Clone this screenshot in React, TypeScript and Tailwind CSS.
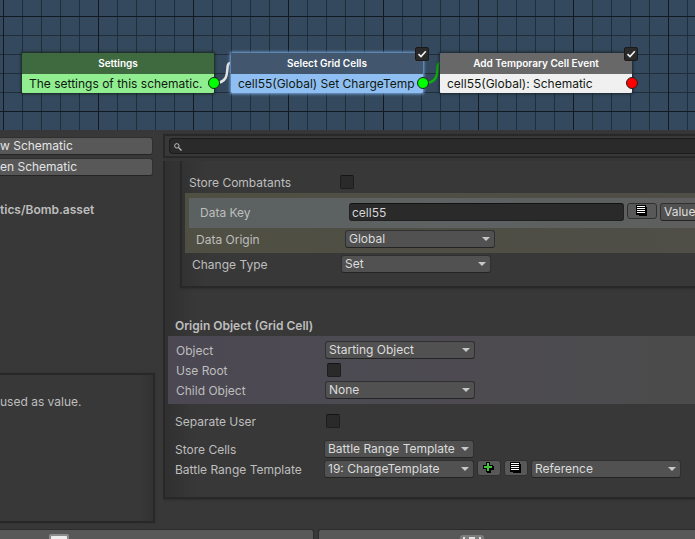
import type { ReactNode } from "react";

function Check() {
  return (
    <svg viewBox="0 0 14 14" className="pointer-events-none absolute inset-0 h-full w-full" aria-hidden="true">
      <path d="M3.5 7.2 6 9.6l4.8-5.4" fill="none" stroke="#f2f2f2" strokeWidth="1.6" />
    </svg>
  );
}

function ListIcon() {
  return (
    <svg width="12" height="12" viewBox="0 0 12 12" shapeRendering="crispEdges" aria-hidden="true">
      <path d="M0 0h10v2h1v9H3v-1H0z" fill="#000" />
      <path d="M1 1h8v1H1zM1 3h8v1H1zM1 5h8v1H1zM1 7h8v1H1z" fill="#fff" />
    </svg>
  );
}

function PlusIcon() {
  return (
    <svg width="12" height="12" viewBox="0 0 12 12" shapeRendering="crispEdges" aria-hidden="true">
      <path d="M3 0h4v3h3v1h1v4H8v3H4v-1H3V7H0V3h3z" fill="#000" />
      <path d="M4 1h2v3h3v2H6v3H4V6H1V4h3z" fill="#3fc43f" />
    </svg>
  );
}

function Dropdown({ id, label, value, width }: { id: string; label?: string; value: string; width: string }) {
  return (
    <div className={`relative shrink-0 ${width}`}>
      <select
        id={id}
        aria-label={label}
        className="block h-[18px] w-full appearance-none rounded-[3px] border border-[#303030] border-b-[#242424] bg-[#515151] pl-[3px] pr-4 text-[12px] leading-[16px] text-[#dcdcdc] outline-none"
      >
        <option>{value}</option>
      </select>
      <svg width="8" height="4" viewBox="0 0 8 4" className="pointer-events-none absolute right-[5px] top-[7px]" aria-hidden="true">
        <path d="M0 0h8L4 4z" fill="#c8c8c8" />
      </svg>
    </div>
  );
}

function CheckField({ id }: { id: string }) {
  return (
    <input
      id={id}
      type="checkbox"
      className="ml-0.5 h-3.5 w-3.5 shrink-0 appearance-none rounded-[2px] border border-[#1e1e1e] border-t-[#141414] bg-[#2a2a2a]"
    />
  );
}

function Row({ id, label, className = "h-5", children }: { id: string; label: string; className?: string; children: ReactNode }) {
  return (
    <div className={`flex items-center ${className}`}>
      <label htmlFor={id} className="w-[149px] shrink-0 whitespace-nowrap pt-0.5 leading-4">
        {label}
      </label>
      {children}
    </div>
  );
}

function IconButton({ label, width, children }: { label: string; width: string; children: ReactNode }) {
  return (
    <button
      type="button"
      aria-label={label}
      className={`flex h-4 shrink-0 items-center justify-center rounded-[3px] border border-[#303030] bg-[#585858] ${width}`}
    >
      {children}
    </button>
  );
}

type NodeProps = {
  place: string;
  title: string;
  text: string;
  head: string;
  body: string;
  frame: string;
  port: string;
  toggle?: boolean;
};

function SchematicNode({ place, title, text, head, body, frame, port, toggle }: NodeProps) {
  return (
    <article className={`absolute top-[53px] w-[192px] ${place}`}>
      <div className={`overflow-hidden rounded-[1px] ${frame}`}>
        <h2 className={`h-[21px] text-center text-[10px] font-semibold leading-[21px] text-white ${head}`}>{title}</h2>
        <p className={`h-[19px] overflow-hidden whitespace-nowrap pl-[7px] text-[12px] leading-[19px] text-[#101810] ${body}`}>{text}</p>
      </div>
      <span className={`absolute -right-1.5 top-[24px] h-3 w-3 rounded-full border border-[#202020] ${port}`} />
      {toggle && (
        <span className="absolute -right-1.5 -top-1.5 h-3.5 w-3.5">
          <input
            type="checkbox"
            defaultChecked
            aria-label={`Enable ${title}`}
            className="block h-full w-full appearance-none rounded-[2px] border border-[#1a1a1a] bg-[#2a2a2a]"
          />
          <Check />
        </span>
      )}
    </article>
  );
}

export default function App() {
  return (
    <div className="flex h-screen flex-col overflow-hidden bg-[#383838] font-['Inter','Liberation_Sans',sans-serif] text-[12px] text-[#bebebe]">
      <section
        aria-label="Schematic graph"
        className="relative h-[130px] shrink-0 overflow-hidden bg-[#34495e] bg-[linear-gradient(to_right,#111a23_1px,transparent_1px),linear-gradient(to_bottom,#111a23_1px,transparent_1px),linear-gradient(to_right,#202d3a_1px,transparent_1px),linear-gradient(to_bottom,#202d3a_1px,transparent_1px)] bg-[size:95px_95px,95px_95px,19px_19px,19px_19px] bg-[position:3px_16px]"
      >
        <svg className="absolute left-0 top-0 h-full w-full" fill="none" aria-hidden="true">
          <path d="M215 83c18 0 9-20 15-20" stroke="#e4e4e4" strokeWidth="2.5" />
          <path d="M424 83c20 0 10-20 16-20" stroke="#08b408" strokeWidth="2.5" />
        </svg>
        <SchematicNode
          place="left-[22px]"
          title="Settings"
          text="The settings of this schematic."
          head="bg-[#3f6a3f]"
          body="bg-[#90ee90]"
          frame="shadow-[0_0_3px_1px_#16251c]"
          port="bg-[#00ff00]"
        />
        <SchematicNode
          place="left-[231px]"
          title="Select Grid Cells"
          text="cell55(Global) Set ChargeTemp"
          head="bg-[#42566d]"
          body="bg-[#8fbff2]"
          frame="shadow-[0_0_3px_1px_#78a9e0]"
          port="bg-[#00ff00]"
          toggle
        />
        <SchematicNode
          place="left-[440px]"
          title="Add Temporary Cell Event"
          text="cell55(Global): Schematic"
          head="bg-[#686868]"
          body="bg-[#f0f0f0]"
          frame="shadow-[0_0_3px_1px_#1b242e]"
          port="bg-[#ff0000]"
          toggle
        />
      </section>

      <main className="flex min-h-0 flex-1">
        <aside className="flex w-[155px] shrink-0 flex-col pb-1.5 pt-[7px]">
          <div className="flex flex-col gap-[3px] pr-0.5">
            <button type="button" className="h-[18px] rounded-r-[3px] border border-l-0 border-[#303030] border-b-[#242424] bg-[#585858] text-left leading-4 text-[#e4e4e4]">
              w Schematic
            </button>
            <button type="button" className="h-[18px] rounded-r-[3px] border border-l-0 border-[#303030] border-b-[#242424] bg-[#585858] text-left leading-4 text-[#e4e4e4]">
              en Schematic
            </button>
          </div>
          <p className="mt-[26px] font-semibold leading-4">tics/Bomb.asset</p>
          <div className="mt-auto h-[150px] border-2 border-l-0 border-[#282828] bg-[linear-gradient(to_left,#323232,#383838_14px)] pt-[19px] shadow-[0_0_2px_#2c2c2c]">
            <p className="leading-4">used as value.</p>
          </div>
        </aside>

        <section aria-label="Node settings" className="ml-2 min-w-0 flex-1 overflow-hidden pt-1">
          <div className="relative border-y-2 border-l-2 border-[#282828] py-0.5 pl-1 shadow-[0_0_2px_#2c2c2c]">
            <input
              type="search"
              aria-label="Search"
              className="block h-4 w-full rounded-l-[4px] border border-r-0 border-[#1c1c1c] bg-[#2a2a2a] pl-5 text-[#d2d2d2] outline-none"
            />
            <svg width="8" height="8" viewBox="0 0 9 9" fill="none" stroke="#c4c4c4" className="absolute left-[9px] top-[7px]" aria-hidden="true">
              <circle cx="3.2" cy="3.2" r="2.5" strokeWidth="1.1" />
              <path d="m5.2 5.2 3.2 3.2" strokeWidth="1.5" />
            </svg>
          </div>

          <div className="mt-[3px] border-b-2 border-l-2 border-[#282828] bg-[linear-gradient(to_right,#303030,#383838_30px)] pb-[18px] shadow-[0_1px_2px_#2c2c2c]">
            <div className="ml-[15px] border-b-2 border-l-2 border-[#282828] bg-[linear-gradient(to_right,#323232,#383838_24px)] pb-3 pt-[11px] shadow-[0_1px_2px_#2c2c2c]">
              <div className="pb-px pl-[7px]">
                <Row id="store-combatants" label="Store Combatants">
                  <CheckField id="store-combatants" />
                </Row>
              </div>
              <div className="ml-[3px] bg-[linear-gradient(to_right,#504f43,#4f4e47)] pt-[5px]">
                <div className="ml-1 bg-[linear-gradient(to_right,#5a6160,#5e6262_50%,#5e5e5e)] pl-[11px]">
                  <Row id="data-key" label="Data Key" className="h-[30px] pb-0.5">
                    <input
                      id="data-key"
                      type="text"
                      defaultValue="cell55"
                      className="h-[18px] w-[275px] shrink-0 rounded-[3px] border border-[#202020] border-t-[#121212] bg-[#2a2a2a] pl-0.5 leading-4 text-[#d6d6d6] outline-none"
                    />
                    <div className="ml-[3px] flex shrink-0 items-start gap-[3px]">
                      <IconButton label="Data key list" width="w-[30px]">
                        <ListIcon />
                      </IconButton>
                      <Dropdown id="data-key-type" label="Data key type" value="Value" width="w-[150px]" />
                    </div>
                  </Row>
                </div>
                <div className="pl-[11px]">
                  <Row id="data-origin" label="Data Origin" className="h-[25px] pb-1">
                    <Dropdown id="data-origin" value="Global" width="w-[150px]" />
                  </Row>
                </div>
              </div>
              <div className="pl-[10px]">
                <Row id="change-type" label="Change Type" className="h-[21px]">
                  <Dropdown id="change-type" value="Set" width="w-[150px]" />
                </Row>
              </div>
            </div>

            <h3 className="mt-[28px] pl-[10px] font-semibold leading-5">Origin Object (Grid Cell)</h3>
            <div className="ml-[3px] bg-[linear-gradient(to_right,#4b4853,#4d4b51_55%,#4b4b4b)] py-1 pl-2">
              <Row id="object" label="Object">
                <Dropdown id="object" value="Starting Object" width="w-[150px]" />
              </Row>
              <Row id="use-root" label="Use Root">
                <CheckField id="use-root" />
              </Row>
              <Row id="child-object" label="Child Object">
                <Dropdown id="child-object" value="None" width="w-[150px]" />
              </Row>
            </div>
            <div className="pl-[10px] pt-[7px]">
              <Row id="separate-user" label="Separate User">
                <CheckField id="separate-user" />
              </Row>
              <div className="pt-2">
                <Row id="store-cells" label="Store Cells">
                  <Dropdown id="store-cells" value="Battle Range Template" width="w-[150px]" />
                </Row>
                <Row id="range-template" label="Battle Range Template">
                  <Dropdown id="range-template" value="19: ChargeTemplate" width="w-[150px]" />
                  <div className="ml-[3px] flex items-start gap-[3px]">
                    <IconButton label="Add template" width="w-6">
                      <PlusIcon />
                    </IconButton>
                    <IconButton label="Template list" width="w-6">
                      <ListIcon />
                    </IconButton>
                    <Dropdown id="template-mode" label="Template mode" value="Reference" width="w-[150px]" />
                  </div>
                </Row>
              </div>
            </div>
          </div>
        </section>
      </main>

      <footer className="flex h-2.5 shrink-0 gap-1 overflow-hidden">
        <button type="button" aria-label="Save" className="flex h-6 w-[314px] shrink-0 rounded-tr-[3px] border border-l-0 border-[#2c2c2c] bg-[#585858] pl-[48px] pt-1">
          <svg width="22" height="16" viewBox="0 0 22 16" aria-hidden="true">
            <path d="M1 2q0-2 2-2h16q2 0 2 2v14H1z" fill="#8c8c8c" />
            <path d="M3 3q0-1 1-1h14q1 0 1 1v13H3z" fill="#eeeeee" />
          </svg>
        </button>
        <button type="button" aria-label="Settings" className="flex h-6 flex-1 rounded-tl-[3px] border border-r-0 border-[#2c2c2c] bg-[#585858] pl-[141px] pt-1">
          <svg width="24" height="16" viewBox="0 0 24 16" aria-hidden="true">
            <path d="M0 4q0-3 3-3h18q3 0 3 3v12H0z" fill="#7c7c7c" />
            <path d="M3 3h2v13H3zM9 3h6v13H9zM19 3h2v13h-2z" fill="#e0e0e0" />
          </svg>
        </button>
      </footer>
    </div>
  );
}
